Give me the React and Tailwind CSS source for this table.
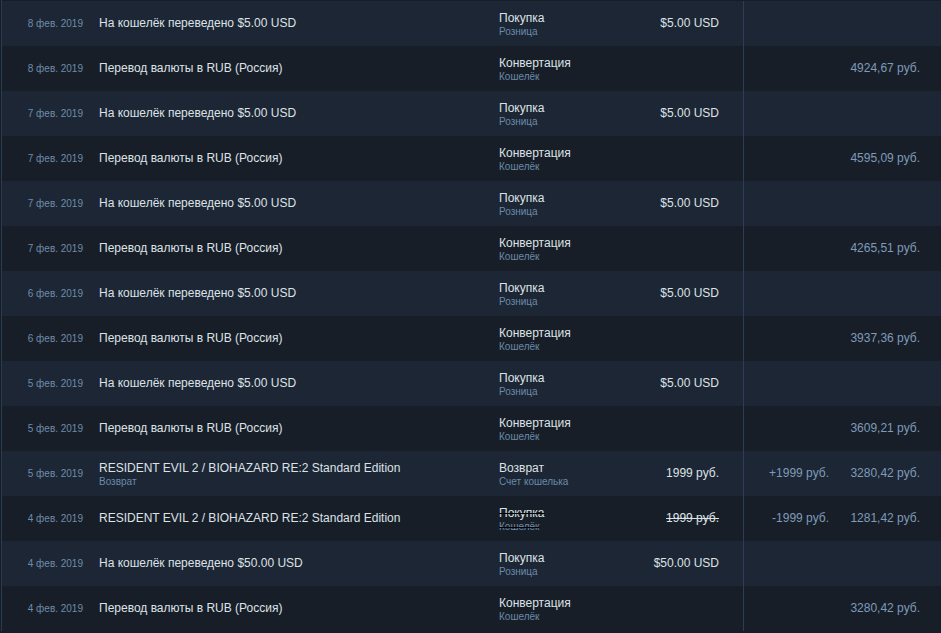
const rows = [
  { date: "8 фев. 2019", item: "На кошелёк переведено $5.00 USD", type: "Покупка", sub: "Розница", total: "$5.00 USD" },
  { date: "8 фев. 2019", item: "Перевод валюты в RUB (Россия)", type: "Конвертация", sub: "Кошелёк", balance: "4924,67 руб." },
  { date: "7 фев. 2019", item: "На кошелёк переведено $5.00 USD", type: "Покупка", sub: "Розница", total: "$5.00 USD" },
  { date: "7 фев. 2019", item: "Перевод валюты в RUB (Россия)", type: "Конвертация", sub: "Кошелёк", balance: "4595,09 руб." },
  { date: "7 фев. 2019", item: "На кошелёк переведено $5.00 USD", type: "Покупка", sub: "Розница", total: "$5.00 USD" },
  { date: "7 фев. 2019", item: "Перевод валюты в RUB (Россия)", type: "Конвертация", sub: "Кошелёк", balance: "4265,51 руб." },
  { date: "6 фев. 2019", item: "На кошелёк переведено $5.00 USD", type: "Покупка", sub: "Розница", total: "$5.00 USD" },
  { date: "6 фев. 2019", item: "Перевод валюты в RUB (Россия)", type: "Конвертация", sub: "Кошелёк", balance: "3937,36 руб." },
  { date: "5 фев. 2019", item: "На кошелёк переведено $5.00 USD", type: "Покупка", sub: "Розница", total: "$5.00 USD" },
  { date: "5 фев. 2019", item: "Перевод валюты в RUB (Россия)", type: "Конвертация", sub: "Кошелёк", balance: "3609,21 руб." },
  {
    date: "5 фев. 2019",
    item: "RESIDENT EVIL 2 / BIOHAZARD RE:2 Standard Edition",
    itemSub: "Возврат",
    type: "Возврат",
    sub: "Счет кошелька",
    total: "1999 руб.",
    change: "+1999 руб.",
    balance: "3280,42 руб.",
  },
  {
    date: "4 фев. 2019",
    item: "RESIDENT EVIL 2 / BIOHAZARD RE:2 Standard Edition",
    type: "Покупка",
    sub: "Кошелёк",
    total: "1999 руб.",
    change: "-1999 руб.",
    balance: "1281,42 руб.",
    refunded: true,
  },
  { date: "4 фев. 2019", item: "На кошелёк переведено $50.00 USD", type: "Покупка", sub: "Розница", total: "$50.00 USD" },
  { date: "4 фев. 2019", item: "Перевод валюты в RUB (Россия)", type: "Конвертация", sub: "Кошелёк", balance: "3280,42 руб." },
];

export default function App() {
  return (
    <div className="min-h-[633px] w-[941px] bg-[#161d27] pl-px font-['Liberation_Sans',Arial,sans-serif]">
      <div className="border-l border-[#2a3a4f] pt-px">
        {rows.map((r, i) => (
          <Row key={i} r={r} light={i % 2 === 0} />
        ))}
      </div>
    </div>
  );
}

function Row({ r, light }) {
  const strike = r.refunded ? "line-through" : "";
  return (
    <div className={`flex h-[45px] items-center ${light ? "bg-[#1c2634]" : "bg-[#171e28]"}`}>
      {/* date */}
      <div className="w-[89px] pr-[8px] pb-px text-right text-[10px] text-[#6f8cab]">{r.date}</div>

      {/* item */}
      <div className={`w-[400px] pl-[8px] ${r.itemSub ? "pt-[2px]" : "pb-[2px]"}`}>
        <div className="text-[12px] leading-[14px] text-[#dde2e6]">{r.item}</div>
        {r.itemSub && <div className="text-[10px] leading-[13px] text-[#6b8aaa]">{r.itemSub}</div>}
      </div>

      {/* type */}
      <div className={`w-[120px] pl-[8px] pt-[3px] ${strike}`}>
        <div className="text-[12px] leading-[14px] text-[#dde2e6]">{r.type}</div>
        <div className="text-[10px] leading-[14px] text-[#6b8aaa]">{r.sub}</div>
      </div>

      {/* total */}
      <div className={`flex h-full w-[133px] items-center justify-end border-r border-[#2c3e56] pr-[24px] pb-[2px] text-[12px] text-[#dde2e6] ${strike}`}>
        {r.total}
      </div>

      {/* wallet change */}
      <div className="w-[86px] pr-[1px] pb-[2px] text-right text-[12px] text-[#7f9bb8]">{r.change}</div>

      {/* balance */}
      <div className="w-[90px] pb-[2px] text-right text-[12px] text-[#7f9bb8]">{r.balance}</div>
    </div>
  );
}
